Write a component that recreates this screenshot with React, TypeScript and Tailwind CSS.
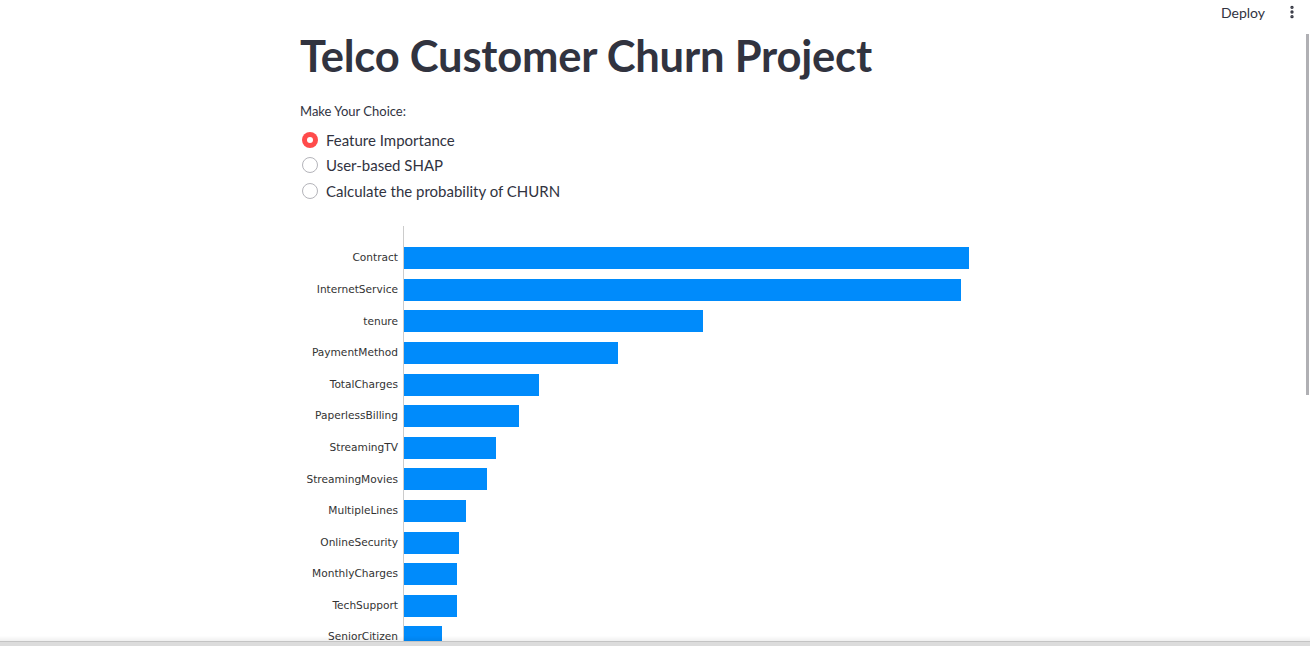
import { EllipsisVertical } from 'lucide-react'

const features: { name: string; width: number }[] = [
    { name: 'Contract', width: 565 },
    { name: 'InternetService', width: 557 },
    { name: 'tenure', width: 299 },
    { name: 'PaymentMethod', width: 214 },
    { name: 'TotalCharges', width: 135 },
    { name: 'PaperlessBilling', width: 115 },
    { name: 'StreamingTV', width: 92 },
    { name: 'StreamingMovies', width: 83 },
    { name: 'MultipleLines', width: 62 },
    { name: 'OnlineSecurity', width: 55 },
    { name: 'MonthlyCharges', width: 53 },
    { name: 'TechSupport', width: 53 },
    { name: 'SeniorCitizen', width: 38 },
    { name: 'OnlineBackup', width: 30 },
    { name: 'Partner', width: 22 },
]

const options = ['Feature Importance', 'User-based SHAP', 'Calculate the probability of CHURN']

function Radio({ label, checked }: { label: string; checked: boolean }) {
    return (
        <label className="flex items-center gap-[8px] h-[25.5px]">
            {checked ? (
                <span className="ml-[2px] w-4 h-4 rounded-full bg-[#ff4b4b] flex items-center justify-center">
                    <span className="w-[6px] h-[6px] rounded-full bg-white" />
                </span>
            ) : (
                <span className="ml-[2px] w-4 h-4 rounded-full border border-[#b4b4ba] bg-white" />
            )}
            <span className="text-[15px] text-[#31333f]">{label}</span>
        </label>
    )
}

export default function App() {
    return (
        <div className="min-h-screen bg-white text-[#31333f]" style={{ fontFamily: 'Lato, "Noto Sans", sans-serif' }}>
            <header className="h-[24px] flex items-center justify-end pr-[10px] gap-[19px]">
                <button className="text-[14px] text-[#31333f] mt-[1px]">Deploy</button>
                <EllipsisVertical size={16} strokeWidth={3} className="text-[#31333f]" />
            </header>

            <main className="w-[710px] mx-auto">
                <h1 className="text-[43.5px] font-bold leading-[64px] tracking-[-0.2px] -mt-[1px]">
                    Telco Customer Churn Project
                </h1>
                <p className="text-[13px] mt-[14px] leading-[20px]">Make Your Choice:</p>
                <div className="flex flex-col mt-[6px]">
                    {options.map((o, i) => (
                        <Radio key={o} label={o} checked={i === 0} />
                    ))}
                </div>

                <div className="mt-[22px] flex" style={{ fontFamily: '"DejaVu Sans", sans-serif' }}>
                    <div className="w-[103px] pt-[17px] flex flex-col">
                        {features.map(f => (
                            <div key={f.name} className="h-[31.6px] flex items-center justify-end pr-[5px] text-[10.6px] text-[#333]">
                                {f.name}
                            </div>
                        ))}
                    </div>
                    <div className="border-l border-[#cccccc] pt-[17px] flex flex-col">
                        {features.map(f => (
                            <div key={f.name} className="h-[31.6px] flex items-center">
                                <div className="h-[22px] bg-[#008bfb]" style={{ width: f.width }} />
                            </div>
                        ))}
                    </div>
                </div>
            </main>

            <div className="fixed right-[1px] top-[34px] w-[3px] h-[361px] bg-[#b0b0b4]" />
            <div className="fixed left-0 right-0 bottom-0 h-[10px] flex flex-col">
                <div className="h-[5px] bg-gradient-to-b from-transparent to-[#00000010]" />
                <div className="h-[1px] bg-[#c4c4c4]" />
                <div className="flex-1 bg-[#dcdcdc]" />
            </div>
        </div>
    )
}
